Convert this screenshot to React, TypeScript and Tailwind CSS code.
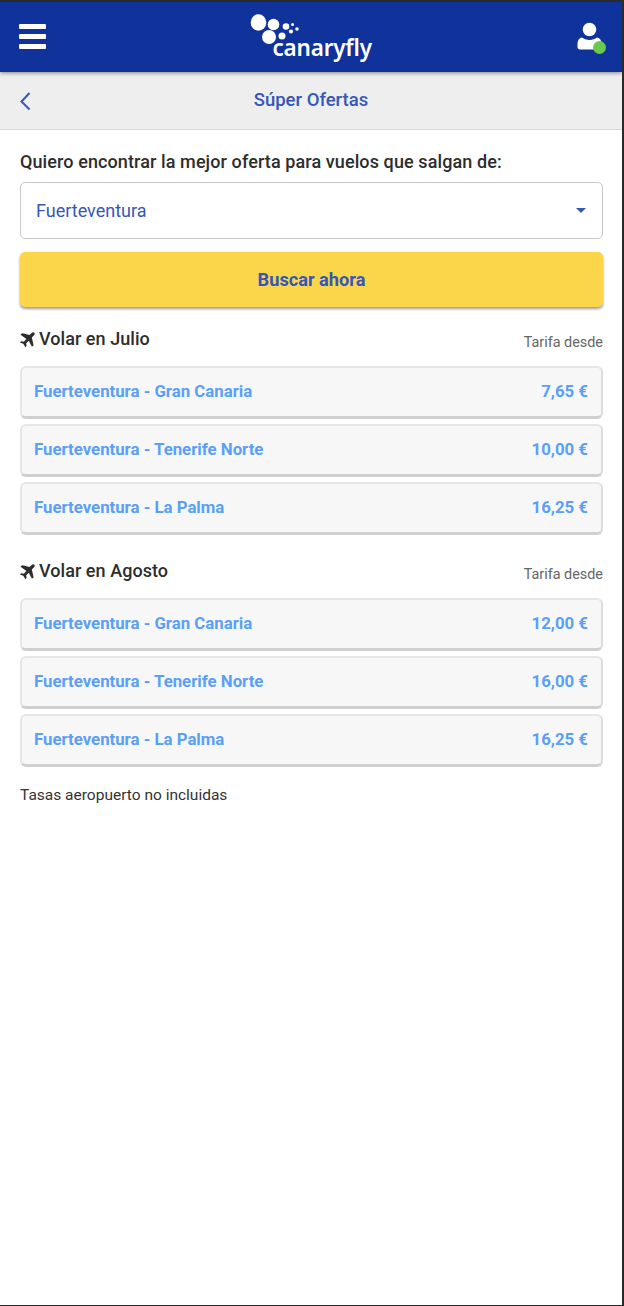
import React from 'react';

const sections = [
  {
    month: 'Volar en Julio',
    offers: [
      { route: 'Fuerteventura - Gran Canaria', price: '7,65 €' },
      { route: 'Fuerteventura - Tenerife Norte', price: '10,00 €' },
      { route: 'Fuerteventura - La Palma', price: '16,25 €' },
    ],
  },
  {
    month: 'Volar en Agosto',
    offers: [
      { route: 'Fuerteventura - Gran Canaria', price: '12,00 €' },
      { route: 'Fuerteventura - Tenerife Norte', price: '16,00 €' },
      { route: 'Fuerteventura - La Palma', price: '16,25 €' },
    ],
  },
];

const Logo = () => (
  <div className="relative w-[124px] h-[48px] mt-[-2px]">
    <svg className="absolute left-0 top-0" width="52" height="40" viewBox="0 0 52 40" fill="white">
      <ellipse cx="8.500" cy="10.500" rx="7.800" ry="8.200" />
      <ellipse cx="23.500" cy="12.500" rx="5.800" ry="5.800" />
      <circle cx="36" cy="14.500" r="3.300" />
      <circle cx="42.500" cy="12.500" r="1.500" />
      <circle cx="47" cy="17" r="1.800" />
      <circle cx="41" cy="19.500" r="2.100" />
      <circle cx="32" cy="24" r="3.500" />
      <ellipse cx="19" cy="25" rx="7" ry="7" />
    </svg>
    <span className="absolute left-[23px] top-[21px] text-[22.500px] leading-[30px] font-semibold text-white font-['Noto_Sans',sans-serif] tracking-[-0.2px]">
      canaryfly
    </span>
  </div>
);

const UserIcon = () => (
  <div className="relative w-[29px] h-[32px] mt-[2px]">
    <svg className="absolute left-0 top-0" width="26" height="28" viewBox="0 0 26 28" fill="white">
      <circle cx="12.500" cy="7.500" r="6.800" />
      <path d="M5 15.500c2 1.600 4.600 2.400 7.500 2.400s5.500-.8 7.500-2.400c3 .6 4.500 3 4.500 6v3.500c0 1.500-1 2.500-2.500 2.500H3c-1.500 0-2.500-1-2.500-2.500V21.500c0-3 1.500-5.400 4.500-6z" />
    </svg>
    <div className="absolute right-0 bottom-0 w-[13px] h-[13px] rounded-full bg-[#69c94f]" />
  </div>
);

const PlaneIcon = () => (
  <svg width="15" height="15" viewBox="0 0 15 15" fill="#2d2d2d" className="shrink-0">
    <path d="M14.300.7c.7.7.5 1.900-.5 2.900l-2 2 1.700 7.300c.1.200 0 .4-.1.500l-1.100 1c-.2.200-.5.100-.6-.1L8.700 8.800l-2.600 2.600.5 2.300c0 .1 0 .3-.1.400l-.8.800c-.2.200-.5.100-.6-.1L3.300 11.800.4 10.700c-.2-.1-.3-.4-.1-.6l.8-.8c.1-.1.300-.1.400-.1l2.300.5 2.600-2.600L.9 3.100c-.2-.1-.3-.4-.1-.6l1-1.100c.2-.1.400-.2.500-.1l7.300 1.700 2-2c1-1 2-1 2.700-.3z" />
  </svg>
);

export default function App() {
  return (
    <div className="h-[1306px] bg-white border-t-2 border-r-2 border-b border-[#2a2a2a] font-['Roboto',sans-serif] overflow-hidden">
      <header className="relative z-10 h-[70px] bg-[#0f329b] shadow-[0_1px_4px_rgba(0,0,0,0.45)] flex items-center justify-between pl-[19px] pr-[16px]">
        <div className="flex flex-col gap-[5px] w-[27px] -mt-[1px]">
          <span className="h-[5px] bg-white rounded-[1px]" />
          <span className="h-[5px] bg-white rounded-[1px]" />
          <span className="h-[5px] bg-white rounded-[1px]" />
        </div>
        <Logo />
        <UserIcon />
      </header>

      <div className="h-[58px] bg-[#eeeeee] border-b border-[#d8d8d8] flex items-center px-[19px]">
        <svg width="13" height="20" viewBox="0 0 13 20" fill="none" stroke="#3557b7" strokeWidth="2" className="shrink-0">
          <path d="M10.500 2 2.500 10.500l8 8" />
        </svg>
        <h1 className="flex-1 text-center text-[18.500px] font-medium text-[#3557b7] pr-[13px]">Súper Ofertas</h1>
      </div>

      <main className="pl-[20px] pr-[19px] pt-[20px]">
        <p className="text-[18px] leading-[24px] font-medium text-[#2d2d2d] tracking-[0.1px]">
          Quiero encontrar la mejor oferta para vuelos que salgan de:
        </p>

        <div className="mt-[8px] h-[57px] rounded-[5px] border border-[#c8c8c8] bg-white flex items-center justify-between pl-[16px] pr-[16px]">
          <span className="text-[18px] text-[#3557b7] -ml-[1px] -mt-[1px]">Fuerteventura</span>
          <span className="w-0 h-0 border-x-[5px] border-x-transparent border-t-[5px] border-t-[#3557b7]" />
        </div>

        <button className="mt-[13px] w-full h-[55px] rounded-[5px] bg-[#fbd64b] shadow-[0_2px_3px_rgba(0,0,0,0.4)] text-[18.200px] font-bold text-[#3557b7]">
          Buscar ahora
        </button>

        {sections.map((section) => (
          <section key={section.month} className="mt-[18px] mb-[22px]">
            <div className="flex items-end justify-between h-[26px]">
              <h2 className="flex items-center gap-[4px] text-[18px] leading-[24px] font-medium text-[#2d2d2d] tracking-[0.05px]">
                <PlaneIcon />
                {section.month}
              </h2>
              <span className="text-[14.400px] leading-[20px] text-[#666666] -mb-[2px]">Tarifa desde</span>
            </div>
            <div className="mt-[15px] flex flex-col gap-[5px]">
              {section.offers.map((offer) => (
                <div
                  key={offer.route}
                  className="h-[53px] rounded-[6px] bg-[#f7f7f7] border-2 border-[#e6e6e6] border-r-[#dcdcdc] border-b-[3px] border-b-[#d0d0d0] flex items-center justify-between pl-[12px] pr-[13px] text-[16.800px] font-bold text-[#5aa0f7]"
                >
                  <span>{offer.route}</span>
                  <span>{offer.price}</span>
                </div>
              ))}
            </div>
          </section>
        ))}

        <p className="-mt-[4px] text-[15.500px] leading-[20px] text-[#333333]">Tasas aeropuerto no incluidas</p>
      </main>
    </div>
  );
}
